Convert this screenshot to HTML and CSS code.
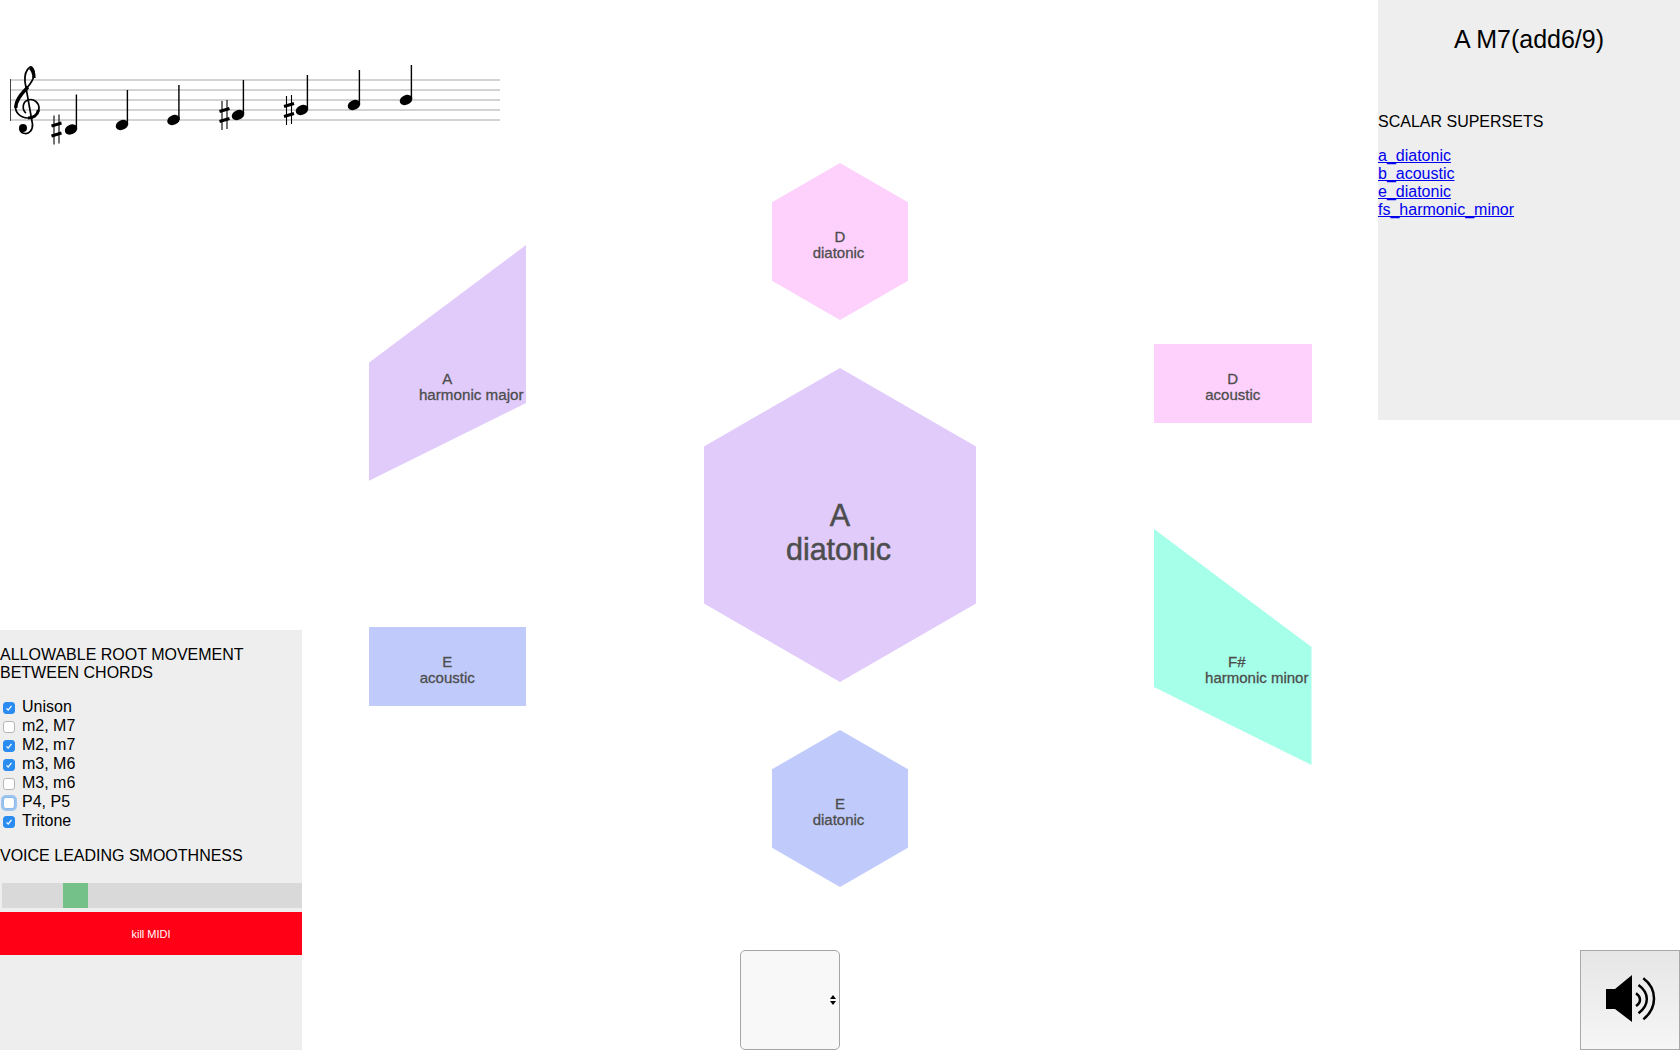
FILE: index.html
```html
<!DOCTYPE html>
<html>
    <head>
        <title>Chord Explorer</title>
        <link rel="stylesheet" href="styles.css">
    </head>
    <body>
        <div id="container">
            <div class="leftCol">
                <svg class="score" width="502" height="120" viewBox="0 0 502 120">
                    <defs>
                        <g id="note">
                            <ellipse rx="6.5" ry="4.8" transform="rotate(-25)"/>
                            <rect x="4.700" y="-35" width="1.4" height="35"/>
                        </g>
                        <g id="sharp">
                            <path class="sharpV" d="M-2.500 -14V15M2.500 -15V14"/>
                            <path class="sharpH" d="M-5 -3.500L5 -6.500M-5 6.500L5 3.500"/>
                        </g>
                    </defs>
                    <g class="staff">
                        <line x1="10" y1="40" x2="500" y2="40"/>
                        <line x1="10" y1="50" x2="500" y2="50"/>
                        <line x1="10" y1="60" x2="500" y2="60"/>
                        <line x1="10" y1="70" x2="500" y2="70"/>
                        <line x1="10" y1="80" x2="500" y2="80"/>
                    </g>
                    <line class="bar" x1="10.500" y1="39" x2="10.500" y2="81"/>
                    <!-- treble clef -->
                    <path class="clefThin" d="M26 73C22 70 22 62 28 60C34 58 39 63 39 68C39 74 34 78 28 78C20 78 15 72 15.500 66C16 57 25 51 30 44C33 40 34.500 36 34 32C33.500 28 31 26 29.500 27.500C26 30 24.500 36 25 42L32.500 84C33 90 29 94 25 93.500C21 93 20 90 20 88"/>
                    <path class="clefThick" d="M15.800 68C15.500 60 22 53 28 47M34 38C34 33 32 29 30 28M38.500 70C37.500 75 33 78 28 78"/>
                    <circle cx="23" cy="88" r="4"/>
                    <use href="#note" x="71" y="89.500"/>
                    <use href="#note" x="122" y="85"/>
                    <use href="#note" x="173.500" y="80"/>
                    <use href="#note" x="238" y="75"/>
                    <use href="#note" x="302" y="70"/>
                    <use href="#note" x="354" y="65"/>
                    <use href="#note" x="406" y="60"/>
                    <use href="#sharp" x="56.500" y="89.500"/>
                    <use href="#sharp" x="224.500" y="75"/>
                    <use href="#sharp" x="289" y="70"/>
                </svg>
                <div class="rootPanel">
                    <h3>ALLOWABLE ROOT MOVEMENT BETWEEN CHORDS</h3>
                    <label><input type="checkbox" checked/>Unison</label>
                    <label><input type="checkbox"/>m2, M7</label>
                    <label><input type="checkbox" checked/>M2, m7</label>
                    <label><input type="checkbox" checked/>m3, M6</label>
                    <label><input type="checkbox"/>M3, m6</label>
                    <label><input class="focused" type="checkbox"/>P4, P5</label>
                    <label><input type="checkbox" checked/>Tritone</label>
                    <h3 class="voiceTitle">VOICE LEADING SMOOTHNESS</h3>
                    <div class="slider"><div class="thumb"></div></div>
                    <button class="killMidi">kill MIDI</button>
                </div>
            </div>
            <div class="centerCol">
                <div class="node hex big purple"><div class="label"><span>A</span><span class="shift">diatonic</span></div></div>
                <div class="node hex small pink top"><div class="label"><span>D</span><span class="shift">diatonic</span></div></div>
                <div class="node hex small blue bottom"><div class="label"><span>E</span><span class="shift">diatonic</span></div></div>
                <div class="node para up purple harmMajor"><div class="label"><span>A</span><span class="wide">harmonic major</span></div></div>
                <div class="node para down green harmMinor"><div class="label"><span class="sharpName">F#</span><span class="wide">harmonic minor</span></div></div>
                <div class="node rect pink dAcoustic"><div class="label"><span>D</span><span>acoustic</span></div></div>
                <div class="node rect blue eAcoustic"><div class="label"><span>E</span><span>acoustic</span></div></div>
                <select class="chordSelect"></select>
            </div>
            <div class="rightCol">
                <div class="infoPanel">
                    <h2>A M7(add6/9)</h2>
                    <h3>SCALAR SUPERSETS</h3>
                    <a href="#">a_diatonic</a>
                    <a href="#">b_acoustic</a>
                    <a href="#">e_diatonic</a>
                    <a href="#">fs_harmonic_minor</a>
                </div>
                <button class="soundBtn">
                    <svg width="48" height="50" viewBox="0 0 48 50">
                        <path class="speaker" d="M0 14H9L26 0V47L9 34H0Z"/>
                        <path class="wave" d="M30 18.300C35.300 22 35.300 27.500 30 31"/>
                        <path class="wave" d="M32.500 10C43.600 18 43.600 30 32.500 38.300"/>
                        <path class="wave" d="M37.300 3.300C51.600 14 51.600 33 37.300 44.300"/>
                    </svg>
                </button>
            </div>
        </div>
    </body>
</html>
```

FILE: styles.css
```css
html, body {
    margin: 0;
    height: 100%;
    overflow: hidden;
}

body {
    background-color: #fff;
    font-family: "Liberation Sans", Arial, sans-serif;
    font-size: 16px;
    color: #000;
}

#container {
    display: grid;
    grid-template-columns: 302px 1fr 302px;
    height: 1050px;
}

h2, h3 {
    margin: 0;
    font-weight: normal;
}

h3 {
    font-size: 16px;
    line-height: 18px;
}

/* left column */
.leftCol {
    display: flex;
    flex-direction: column;
    justify-content: space-between;
}

.score {
    display: block;
    margin-top: 40px;
    overflow: visible;
}

.staff line {
    stroke: #c4c4c4;
    stroke-width: 1.4;
}

.bar {
    stroke: #444;
    stroke-width: 1;
}

.clefThin, .clefThick {
    fill: none;
    stroke: #000;
}

.clefThin {
    stroke-width: 1.7;
}

.clefThick {
    stroke-width: 3.2;
}

.sharpV, .sharpH {
    fill: none;
    stroke: #000;
}

.sharpV {
    stroke-width: 1.1;
}

.sharpH {
    stroke-width: 3;
}

.rootPanel {
    height: 420px;
    box-sizing: border-box;
    padding-top: 16px;
    background-color: #eee;
}

.rootPanel h3 {
    margin-bottom: 15px;
}

.rootPanel label {
    display: flex;
    align-items: center;
    height: 19px;
}

.rootPanel input {
    appearance: none;
    -webkit-appearance: none;
    width: 12px;
    height: 12px;
    margin: 2px 7px 0 3px;
    box-sizing: border-box;
    border: 1px solid #b5b5b5;
    border-radius: 3px;
    background: #fff;
}

.rootPanel input:checked {
    border-color: #2a8cf0;
    background: #2a8cf0 url("data:image/svg+xml,%3Csvg xmlns='http://www.w3.org/2000/svg' viewBox='0 0 12 12'%3E%3Cpath d='M3 6.500L5 8.500L9 3.500' fill='none' stroke='%23fff' stroke-width='1.500'/%3E%3C/svg%3E") center / 100% 100% no-repeat;
}

.rootPanel input.focused {
    border-color: #8ab8ea;
    box-shadow: 0 0 0 2px #9cc4ee;
}

.rootPanel .voiceTitle {
    margin-top: 17px;
    margin-bottom: 18px;
}

.slider {
    height: 25px;
    margin-left: 2px;
    background-color: #d9d9d9;
}

.thumb {
    width: 25px;
    height: 25px;
    margin-left: 61px;
    background-color: #74c28a;
}

.killMidi {
    display: block;
    width: 100%;
    height: 43px;
    margin-top: 4px;
    padding: 0;
    border: 0;
    background-color: #ff0016;
    color: #fff;
    font-family: inherit;
    font-size: 11px;
}

/* diagram */
.centerCol {
    position: relative;
}

.node {
    position: absolute;
    display: flex;
    align-items: center;
    justify-content: center;
}

.purple {
    background-color: #e0cbfb;
}

.pink {
    background-color: #fed1fd;
}

.blue {
    background-color: #c0cbfb;
}

.green {
    background-color: #a5ffe9;
}

.label {
    display: flex;
    flex-direction: column;
    align-items: center;
    margin-top: 6px;
    color: #4d4d4d;
    font-size: 15px;
    line-height: 16px;
    white-space: nowrap;
    -webkit-text-stroke: 0.3px #4d4d4d;
}

.hex {
    clip-path: polygon(50% 0, 100% 25%, 100% 75%, 50% 100%, 0 75%, 0 25%);
}

.big {
    left: 402px;
    top: 368px;
    width: 272px;
    height: 314px;
}

.big .label {
    margin-top: 13px;
    font-size: 30.5px;
    line-height: 34px;
    -webkit-text-stroke: 0.5px #4d4d4d;
}

.shift {
    margin-left: -3px;
}

.small {
    left: 470px;
    width: 136px;
    height: 157px;
}

.top {
    top: 163px;
}

.bottom {
    top: 730px;
}

.para, .rect {
    width: 157.5px;
}

.para {
    height: 236px;
}

.para .label {
    margin-top: 47px;
}

.up {
    clip-path: polygon(0 50%, 100% 0, 100% 67%, 0 100%);
}

.down {
    clip-path: polygon(0 0, 100% 50%, 100% 100%, 0 67%);
}

.harmMajor {
    left: 66.5px;
    top: 245px;
}

.harmMinor {
    left: 852px;
    top: 529px;
}

.harmMinor .label {
    margin-top: 45px;
}

.sharpName {
    margin-left: 8px;
}

.wide {
    margin-left: 24px;
    margin-right: -24px;
    font-size: 15.2px;
}

.harmMinor .wide {
    margin-left: 24px;
    margin-right: -24px;
    font-size: 15px;
}

.rect {
    height: 79px;
}

.dAcoustic {
    left: 852px;
    top: 344px;
}

.eAcoustic {
    left: 66.5px;
    top: 627px;
}

.chordSelect {
    position: absolute;
    left: 438px;
    bottom: 0;
    width: 100px;
    height: 100px;
    box-sizing: border-box;
    appearance: none;
    -webkit-appearance: none;
    border: 1px solid #a6a6a6;
    border-radius: 5px;
    background: #f8f8f8 url("data:image/svg+xml,%3Csvg xmlns='http://www.w3.org/2000/svg' viewBox='0 0 6 10'%3E%3Cpath d='M3 0L6 4H0ZM3 10L0 6H6Z'/%3E%3C/svg%3E") right 3px center / 6px 10px no-repeat;
}

/* right column */
.rightCol {
    display: flex;
    flex-direction: column;
    justify-content: space-between;
    align-items: flex-end;
}

.infoPanel {
    width: 100%;
    height: 420px;
    box-sizing: border-box;
    background-color: #eee;
}

.infoPanel h2 {
    margin-top: 25px;
    margin-bottom: 60px;
    font-size: 25px;
    line-height: 28px;
    text-align: center;
}

.infoPanel h3 {
    margin-bottom: 16px;
}

.infoPanel a {
    display: block;
    line-height: 18px;
    color: #00e;
}

.soundBtn {
    display: flex;
    align-items: center;
    justify-content: center;
    width: 100px;
    height: 100px;
    padding: 0;
    box-sizing: border-box;
    border: 1px solid #a9a9a9;
    background: linear-gradient(#e6e6e6, #f6f6f6);
}

.soundBtn svg {
    overflow: visible;
}

.speaker {
    fill: #000;
}

.wave {
    fill: none;
    stroke: #000;
    stroke-width: 2.5;
}
```
